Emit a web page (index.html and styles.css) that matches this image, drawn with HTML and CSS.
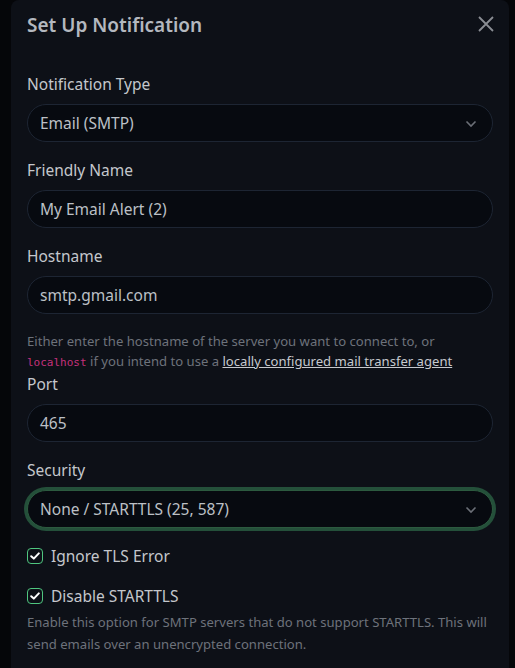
FILE: index.html
```html
<!DOCTYPE html>
<html>
<head>
<meta charset="utf-8">
<link rel="stylesheet" href="styles.css">
</head>
<body>
<div class="modal">
  <div class="modal-header">
    <h5 class="title">Set Up Notification</h5>
    <svg class="close" width="18" height="18" viewBox="0 0 18 18"><path d="M2 2 L16 16 M16 2 L2 16" stroke="#8a8d93" stroke-width="1.8" fill="none"/></svg>
  </div>
  <div class="modal-body">
    <div class="group">
      <label class="label">Notification Type</label>
      <div class="control select">Email (SMTP)<svg class="chev" width="12" height="8" viewBox="0 0 12 8"><path d="M1.5 1.5 L6 6 L10.5 1.5" stroke="#6b6f77" stroke-width="1.6" fill="none"/></svg></div>
    </div>
    <div class="group">
      <label class="label">Friendly Name</label>
      <div class="control">My Email Alert (2)</div>
    </div>
    <div class="group tight">
      <label class="label">Hostname</label>
      <div class="control">smtp.gmail.com</div>
      <div class="help">Either enter the hostname of the server you want to connect to, or <code>localhost</code> if you intend to use a <a href="#">locally configured mail transfer agent</a></div>
    </div>
    <div class="group">
      <label class="label">Port</label>
      <div class="control">465</div>
    </div>
    <div class="group">
      <label class="label">Security</label>
      <div class="control select focus">None / STARTTLS (25, 587)<svg class="chev" width="12" height="8" viewBox="0 0 12 8"><path d="M1.5 1.5 L6 6 L10.5 1.5" stroke="#6b6f77" stroke-width="1.6" fill="none"/></svg></div>
    </div>
    <div class="check-row">
      <span class="box"><svg width="10" height="8" viewBox="0 0 10 8"><path d="M1.2 4.2 L3.8 6.6 L8.8 1.4" stroke="#ffffff" stroke-width="2" fill="none" stroke-linecap="round" stroke-linejoin="round"/></svg></span>
      <span class="check-label">Ignore TLS Error</span>
    </div>
    <div class="check-row">
      <span class="box"><svg width="10" height="8" viewBox="0 0 10 8"><path d="M1.2 4.2 L3.8 6.6 L8.8 1.4" stroke="#ffffff" stroke-width="2" fill="none" stroke-linecap="round" stroke-linejoin="round"/></svg></span>
      <span class="check-label">Disable STARTTLS</span>
    </div>
    <div class="help help2">Enable this option for SMTP servers that do not support STARTTLS. This will send emails over an unencrypted connection.</div>
  </div>
</div>
</body>
</html>
```
FILE: styles.css
```css
html, body {
  margin: 0;
  padding: 0;
  background: #050609;
  height: 668px;
  overflow: hidden;
}
body {
  font-family: "Noto Sans", "Open Sans", sans-serif;
  color: #c4c7cc;
}
.modal {
  margin-left: 11px;
  width: 498px;
  height: 700px;
  background: #0d1017;
  border-radius: 8px 8px 0 0;
  box-sizing: border-box;
  padding: 0 16px;
}
.modal-header {
  display: flex;
  align-items: center;
  justify-content: space-between;
  height: 50px;
}
.title {
  margin: 0;
  font-size: 19px;
  font-weight: 600;
  color: #b4b8bf;
  line-height: 24px;
}
.close {
  margin-right: -2px;
  margin-top: -2px;
}
.modal-body {
  padding-top: 22px;
}
.group {
  margin-bottom: 16px;
  display: flex;
  flex-direction: column;
}
.group.tight {
  margin-bottom: 0;
}
.label {
  font-size: 15.5px;
  line-height: 24px;
  margin-bottom: 8px;
  color: #c4c7cc;
}
.control {
  height: 38px;
  box-sizing: border-box;
  border: 1px solid #1d2533;
  background: #070a10;
  border-radius: 19px;
  padding: 0 12px;
  display: flex;
  align-items: center;
  font-size: 15.5px;
  color: #bcc0c6;
  position: relative;
}
.select .chev {
  position: absolute;
  right: 15px;
  top: 15px;
}
.focus {
  border-color: #2c5a3f;
  box-shadow: 0 0 0 3px #24503a;
}
.help {
  font-size: 13.1px;
  line-height: 20px;
  height: 40px;
  color: #6d727b;
  margin-top: 17px;
  margin-bottom: 1px;
}
.help code {
  font-family: "DejaVu Sans Mono", "Liberation Mono", monospace;
  font-size: 11px;
  line-height: 1;
  color: #c5317c;
}
.help a {
  color: #c6c9ce;
  text-decoration: underline;
}
.check-row {
  display: flex;
  align-items: center;
  height: 24px;
  margin-top: 16px;
}
.check-row + .check-row {
  margin-top: 16px;
}
.box {
  width: 16px;
  height: 16px;
  box-sizing: border-box;
  border: 1.5px solid #4fc57f;
  border-radius: 4px;
  background: #0d1017;
  display: flex;
  align-items: center;
  justify-content: center;
  margin-right: 8px;
}
.check-label {
  font-size: 15.5px;
  color: #c4c7cc;
}
.help2 {
  margin-top: 4px;
  margin-bottom: 0;
  height: auto;
  line-height: 21.5px;
}
```
